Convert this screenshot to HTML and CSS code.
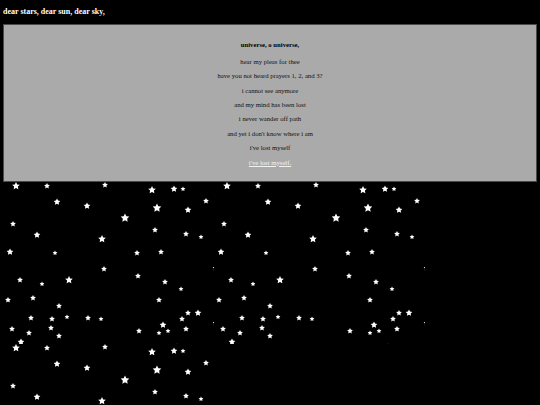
FILE: index.html
```html
<!DOCTYPE html>
<html>
<head>
<meta charset="utf-8">
<title>dear stars</title>
<link rel="stylesheet" href="styles.css">
</head>
<body>
<svg class="defs" aria-hidden="true">
  <defs>
    <path id="s" d="M0,-1 L0.294,-0.405 L0.951,-0.309 L0.476,0.155 L0.588,0.809 L0,0.5 L-0.588,0.809 L-0.476,0.155 L-0.951,-0.309 L-0.294,-0.405Z"/>
    <symbol id="tile" viewBox="0 0 211 162">
      <g fill="#fff">
        <use href="#s" transform="translate(13,4) scale(4)"/>
        <use href="#s" transform="translate(44,4) scale(3)"/>
        <use href="#s" transform="translate(102,3) scale(3)"/>
        <use href="#s" transform="translate(149,8) scale(4)"/>
        <use href="#s" transform="translate(171,7) scale(3.5)"/>
        <use href="#s" transform="translate(180,7) scale(2.5)"/>
        <use href="#s" transform="translate(54,20) scale(3.5)"/>
        <use href="#s" transform="translate(84,24) scale(3.5)"/>
        <use href="#s" transform="translate(154,26) scale(4.5)"/>
        <use href="#s" transform="translate(185,28) scale(3.5)"/>
        <use href="#s" transform="translate(203,19) scale(3)"/>
        <use href="#s" transform="translate(122,36) scale(4.5)"/>
        <use href="#s" transform="translate(10,42) scale(3)"/>
        <use href="#s" transform="translate(152,48) scale(3)"/>
        <use href="#s" transform="translate(34,53) scale(3.5)"/>
        <use href="#s" transform="translate(99,57) scale(4)"/>
        <use href="#s" transform="translate(183,52) scale(3)"/>
        <use href="#s" transform="translate(198,55) scale(2.5)"/>
        <use href="#s" transform="translate(7,70) scale(3.5)"/>
        <use href="#s" transform="translate(52,71) scale(2.5)"/>
        <use href="#s" transform="translate(134,71) scale(3)"/>
        <use href="#s" transform="translate(158,70) scale(3)"/>
        <use href="#s" transform="translate(101,87) scale(3)"/>
        <use href="#s" transform="translate(17,98) scale(3)"/>
        <use href="#s" transform="translate(39,102) scale(2.5)"/>
        <use href="#s" transform="translate(66,98) scale(4)"/>
        <use href="#s" transform="translate(135,94) scale(3)"/>
        <use href="#s" transform="translate(162,100) scale(3)"/>
        <use href="#s" transform="translate(178,107) scale(2.5)"/>
        <use href="#s" transform="translate(5,118) scale(3)"/>
        <use href="#s" transform="translate(30,116) scale(3)"/>
        <use href="#s" transform="translate(56,124) scale(3)"/>
        <use href="#s" transform="translate(156,118) scale(3)"/>
        <use href="#s" transform="translate(28,136) scale(3)"/>
        <use href="#s" transform="translate(49,137) scale(3)"/>
        <use href="#s" transform="translate(64,135) scale(2.5)"/>
        <use href="#s" transform="translate(85,136) scale(3)"/>
        <use href="#s" transform="translate(98,137) scale(2.5)"/>
        <use href="#s" transform="translate(9,147) scale(3)"/>
        <use href="#s" transform="translate(26,151) scale(3)"/>
        <use href="#s" transform="translate(48,146) scale(3)"/>
        <use href="#s" transform="translate(56,154) scale(3)"/>
        <use href="#s" transform="translate(136,149) scale(3)"/>
        <use href="#s" transform="translate(160,143) scale(3.5)"/>
        <use href="#s" transform="translate(156,151) scale(2.5)"/>
        <use href="#s" transform="translate(165,149) scale(2.5)"/>
        <use href="#s" transform="translate(179,137) scale(3)"/>
        <use href="#s" transform="translate(185,131) scale(3)"/>
        <use href="#s" transform="translate(195,131) scale(3.5)"/>
        <use href="#s" transform="translate(183,147) scale(3)"/>
        <use href="#s" transform="translate(18,160) scale(3.5)"/>
        <use href="#s" transform="translate(212.5,141) scale(3)"/>
        <use href="#s" transform="translate(212.5,86) scale(3)"/>
        <use href="#s" transform="translate(174,164.5) scale(3)"/>
      </g>
    </symbol>
  </defs>
</svg>

<h3 class="title">dear stars, dear sun, dear sky,</h3>

<div class="box">
  <h4 class="heading">universe, o universe,</h4>
  <p class="line">hear my pleas for thee</p>
  <p class="line">have you not heard prayers 1, 2, and 3?</p>
  <p class="line">i cannot see anymore</p>
  <p class="line">and my mind has been lost</p>
  <p class="line">i never wander off path</p>
  <p class="line">and yet i don't know where i am</p>
  <p class="line">i've lost myself</p>
  <p class="line"><a class="link" href="#">i've lost myself.</a></p>
</div>

<div class="sky">
  <svg class="tile" viewBox="0 0 211 162"><use href="#tile"/></svg>
  <svg class="tile" viewBox="0 0 211 162"><use href="#tile"/></svg>
  <svg class="tile" viewBox="0 0 211 162"><use href="#tile"/></svg>
</div>
</body>
</html>
```

FILE: styles.css
```css
html, body {
  height: 100%;
  overflow: hidden;
}

body {
  margin: 0;
  padding: 0 3px;
  background: #000;
  font-family: "Liberation Serif", "Times New Roman", serif;
  color: #000;
}

.defs {
  position: absolute;
  width: 0;
  height: 0;
  overflow: hidden;
}

.title {
  margin: 7px 0 8px;
  font-size: 8px;
  font-weight: bold;
  line-height: 9.2px;
  color: #fff;
}

.box {
  background: #aaaaaa;
  border: 1px solid #4a4a4a;
  padding: 7px 0 7.5px;
  text-align: center;
  font-size: 6.7px;
}

.heading {
  margin: 9px 0;
  font-size: 6.7px;
  font-weight: bold;
  line-height: 7.7px;
}

.line {
  margin: 6.7px 0;
  line-height: 7.7px;
  color: #111;
}

.link {
  color: #f2f2f2;
  text-decoration: underline;
}

.sky {
  display: flex;
  flex-wrap: wrap;
  height: 223px;
  overflow: hidden;
}

.tile {
  display: block;
  width: 211px;
  height: 162px;
  flex: none;
}
```
